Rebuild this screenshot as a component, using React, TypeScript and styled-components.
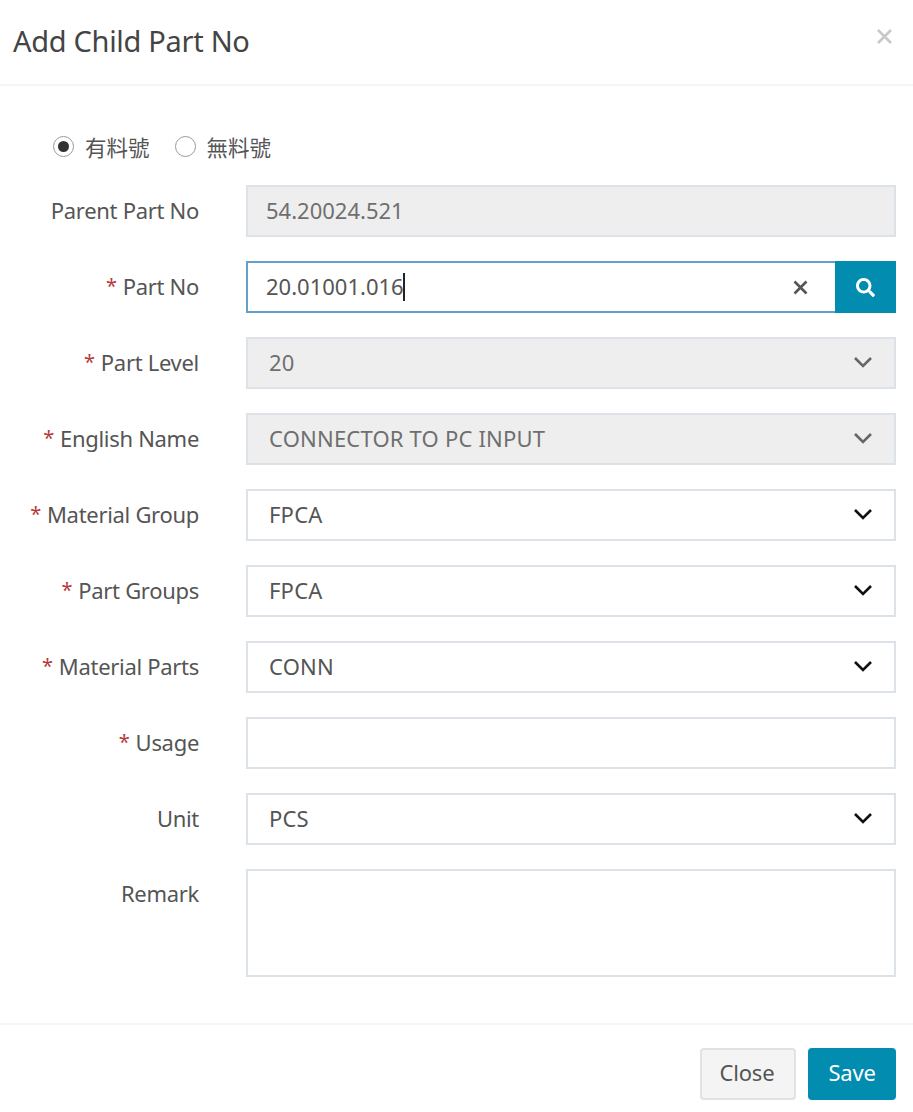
import * as React from "react";
import styled, {createGlobalStyle} from "styled-components";
import {FaSearch} from "react-icons/fa";

const GlobalStyle = createGlobalStyle`
  html, body {
    margin: 0;
    padding: 0;
    background: #fff;
  }
  * {
    box-sizing: border-box;
  }
`
const Modal = styled('div')`
  width: 913px;
  height: 1112px;
  display: flex;
  flex-direction: column;
  font-family: "Noto Sans", "Noto Sans CJK TC", sans-serif;
  color: #555;
  background: #fff;
`
const Header = styled('div')`
  height: 86px;
  flex: none;
  display: flex;
  align-items: center;
  justify-content: space-between;
  padding: 0 20px 3px 13px;
  border-bottom: 2px solid #f4f4f4;
`
const Title = styled('h4')`
  margin: 0;
  font-size: 29px;
  font-weight: 400;
  letter-spacing: -0.3px;
  color: #444;
`
const Dismiss = styled('span')`
  display: flex;
  color: #c8c8c8;
  margin-top: -9px;
`
const Body = styled('div')`
  flex: 1;
  display: flex;
  flex-direction: column;
  gap: 24px;
  padding: 47px 17px 0 0;
`
const RadioRow = styled('div')`
  height: 29px;
  display: flex;
  align-items: center;
  gap: 25px;
  padding: 0 0 3px 53px;
  margin-bottom: -1px;
`
const RadioOption = styled('label')`
  display: flex;
  align-items: center;
  gap: 11px;
  font-size: 21.5px;
  color: #555;
`
const RadioMark = styled('span')<{ $checked?: boolean }>`
  width: 21px;
  height: 21px;
  border-radius: 50%;
  border: 1.5px solid #999;
  display: flex;
  align-items: center;
  justify-content: center;

  &::after {
    content: '';
    width: 11px;
    height: 11px;
    border-radius: 50%;
    background: ${p => p.$checked ? '#333' : 'transparent'};
  }
`
const Row = styled('div')<{ $tall?: boolean }>`
  display: grid;
  grid-template-columns: 199px 650px;
  column-gap: 47px;
  height: ${p => p.$tall ? '108px' : '52px'};
`
const Label = styled('label')<{ $tall?: boolean }>`
  display: flex;
  justify-content: flex-end;
  align-items: ${p => p.$tall ? 'flex-start' : 'center'};
  gap: 6px;
  font-size: 22px;
  line-height: ${p => p.$tall ? '48px' : '50px'};
  letter-spacing: -0.3px;
  padding-bottom: 2px;
  color: #555;
  white-space: nowrap;
`
const Star = styled('span')`
  color: #b5393c;
  font-size: 20px;
`
const Field = styled('div')<{ $disabled?: boolean, $active?: boolean }>`
  height: 100%;
  display: flex;
  align-items: center;
  justify-content: space-between;
  border: 2px solid ${p => p.$active ? '#5fa3cc' : '#dde1e8'};
  background: ${p => p.$disabled ? '#eeeeee' : '#fff'};
  font-size: 22px;
  color: ${p => p.$disabled ? '#6f6f6f' : '#555'};
  padding: 0 21px 2px 21px;
`
const PlainValue = styled('span')`
  margin-left: -3px;
`
const TextValue = styled('span')`
  letter-spacing: 0.2px;
`
const Chevron = styled('svg')<{ $muted?: boolean }>`
  width: 20px;
  height: 12px;
  margin-bottom: 1px;
  fill: none;
  stroke: ${p => p.$muted ? '#666' : '#111'};
  stroke-width: 2.6;
`
const SearchGroup = styled('div')`
  height: 100%;
  display: flex;
`
const SearchInput = styled(Field)`
  flex: 1;
  border-right: 0;
  padding: 0 27px 2px 18px;
`
const Caret = styled('span')`
  display: inline-block;
  width: 2px;
  height: 28px;
  margin-left: -1px;
  background: #222;
  vertical-align: -6px;
`
const ClearIcon = styled('svg')`
  width: 15px;
  height: 15px;
  margin-top: 2px;
  fill: none;
  stroke: #555;
  stroke-width: 2.6;
`
const SearchButton = styled('button')`
  width: 61px;
  border: 0;
  background: #028db0;
  color: #fff;
  display: flex;
  align-items: center;
  justify-content: center;
  padding: 0;
`
const Footer = styled('div')`
  height: 89px;
  flex: none;
  display: flex;
  justify-content: flex-end;
  gap: 12px;
  padding: 23px 17px 0 0;
  border-top: 2px solid #f4f4f4;
`
const Button = styled('button')<{ $primary?: boolean }>`
  height: 52px;
  width: ${p => p.$primary ? '88px' : '96px'};
  border-radius: 4px;
  border: 2px solid ${p => p.$primary ? '#028db0' : '#e2e2e2'};
  background: ${p => p.$primary ? '#028db0' : '#f4f4f4'};
  color: ${p => p.$primary ? '#fff' : '#555'};
  font-family: inherit;
  font-size: 22px;
  letter-spacing: -0.2px;
  padding: 0 ${p => p.$primary ? '0' : '2px'} 4px 0;
`

const ChevronIcon: React.FC<{ muted?: boolean }> = ({muted}) => (
    <Chevron $muted={muted} viewBox="0 0 20 12">
        <path d="M2 2l8 8 8-8"/>
    </Chevron>
)

const selects = [
    {label: 'Part Level', value: '20', required: true, disabled: true},
    {label: 'English Name', value: 'CONNECTOR TO PC INPUT', required: true, disabled: true},
    {label: 'Material Group', value: 'FPCA', required: true},
    {label: 'Part Groups', value: 'FPCA', required: true},
    {label: 'Material Parts', value: 'CONN', required: true},
]

const App: React.FC = () => {
    return <Modal>
        <GlobalStyle/>
        <Header>
            <Title>Add Child Part No</Title>
            <Dismiss>
                <svg width="17" height="17" viewBox="0 0 17 17" fill="none" stroke="currentColor" strokeWidth="2.6">
                    <path d="M2 2l13 13M15 2L2 15"/>
                </svg>
            </Dismiss>
        </Header>
        <Body>
            <RadioRow>
                <RadioOption><RadioMark $checked/>有料號</RadioOption>
                <RadioOption><RadioMark/>無料號</RadioOption>
            </RadioRow>
            <Row>
                <Label>Parent Part No</Label>
                <Field $disabled>
                    <PlainValue>54.20024.521</PlainValue>
                </Field>
            </Row>
            <Row>
                <Label><Star>*</Star>Part No</Label>
                <SearchGroup>
                    <SearchInput $active>
                        <span>20.01001.016<Caret/></span>
                        <ClearIcon viewBox="0 0 15 15"><path d="M1.5 1.5l12 12M13.5 1.5l-12 12"/></ClearIcon>
                    </SearchInput>
                    <SearchButton><FaSearch size={19}/></SearchButton>
                </SearchGroup>
            </Row>
            {selects.map(item => <Row key={item.label}>
                <Label>{item.required && <Star>*</Star>}{item.label}</Label>
                <Field $disabled={item.disabled}>
                    <TextValue>{item.value}</TextValue>
                    <ChevronIcon muted={item.disabled}/>
                </Field>
            </Row>)}
            <Row>
                <Label><Star>*</Star>Usage</Label>
                <Field/>
            </Row>
            <Row>
                <Label>Unit</Label>
                <Field>
                    <TextValue>PCS</TextValue>
                    <ChevronIcon/>
                </Field>
            </Row>
            <Row $tall>
                <Label $tall>Remark</Label>
                <Field/>
            </Row>
        </Body>
        <Footer>
            <Button>Close</Button>
            <Button $primary>Save</Button>
        </Footer>
    </Modal>
};

export default App;
